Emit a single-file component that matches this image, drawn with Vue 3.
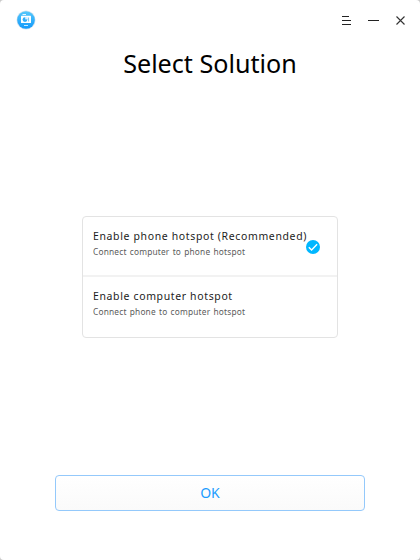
<script setup>
import { ref } from 'vue'

const selected = ref(0)
const options = [
  { title: 'Enable phone hotspot (Recommended)', detail: 'Connect computer to phone hotspot' },
  { title: 'Enable computer hotspot', detail: 'Connect phone to computer hotspot' },
]
</script>

<template>
  <div class="window">
    <header class="titlebar">
      <svg class="logo" width="20" height="20" viewBox="0 0 20 20">
        <defs>
          <linearGradient id="logo-fill" x1="0" y1="0" x2="0" y2="1">
            <stop offset="0" stop-color="#55c8fb" />
            <stop offset="1" stop-color="#1199fb" />
          </linearGradient>
        </defs>
        <circle cx="10" cy="10" r="9.5" fill="#d3e3ef" />
        <circle cx="10" cy="10" r="8.8" fill="url(#logo-fill)" />
        <path d="M6.5 4.5h3.5" stroke="#e6f6ff" stroke-width="1" />
        <rect x="5" y="5.8" width="10" height="7.2" rx=".5" fill="#fff" />
        <circle cx="9" cy="9.6" r="2.4" fill="#32aef8" />
        <path d="M9.2 9.4V7h2.4v2.4z" fill="#d6efff" />
        <path d="M12.6 7.5v4" stroke="#6cc5fa" stroke-width="1" />
        <path d="M8 15.5h4" stroke="#c9ebff" stroke-width="1" />
      </svg>
      <div class="controls">
        <button class="control menu" aria-label="Menu">
          <svg width="10" height="10" viewBox="0 0 10 10"><path d="M0 1.5h7M0 5.5h9M0 9.5h9" stroke="#222" /></svg>
        </button>
        <button class="control" aria-label="Minimize">
          <svg width="11" height="10" viewBox="0 0 11 10"><path d="M0 5.5h11" stroke="#222" /></svg>
        </button>
        <button class="control" aria-label="Close">
          <svg width="10" height="10" viewBox="0 0 10 10"><path d="M.5 1.5l8 8M8.5 1.5l-8 8" stroke="#333" stroke-width="1.1" /></svg>
        </button>
      </div>
    </header>
    <h1>Select Solution</h1>
    <main class="content">
      <div class="options">
        <div v-for="(option, i) in options" :key="option.title" class="option" @click="selected = i">
          <div class="name">{{ option.title }}</div>
          <div class="detail">{{ option.detail }}</div>
          <svg v-if="selected === i" class="check" width="14" height="14" viewBox="0 0 14 14">
            <circle cx="7" cy="7" r="7" fill="#00b7ff" />
            <path d="M2.8 7.2l2.8 2.7 5.5-5.6" fill="none" stroke="#fff" stroke-width="1.4" />
          </svg>
        </div>
      </div>
    </main>
    <button class="ok">OK</button>
  </div>
</template>

<style>
body {
  background: #c9c9c9;
}
</style>

<style scoped>
.window {
  box-sizing: border-box;
  display: flex;
  flex-direction: column;
  width: 420px;
  height: 560px;
  background: #fff;
  border-radius: 4px;
  font-family: "Noto Sans", sans-serif;
}
.titlebar {
  display: flex;
  justify-content: space-between;
  align-items: center;
  height: 40px;
  padding: 0 14px 0 16px;
}
.controls {
  display: flex;
  gap: 17px;
}
.control {
  display: flex;
  padding: 0;
  border: 0;
  background: none;
}
.menu {
  margin-right: -1px;
}
h1 {
  margin: 5px 0 0;
  height: 37px;
  line-height: 36px;
  font-size: 26px;
  font-weight: 400;
  text-align: center;
  color: #000;
  transform: scaleX(0.967);
}
.content {
  flex: 1;
  padding: 134px 82px 0;
}
.options {
  box-sizing: border-box;
  height: 122px;
  border: 1px solid #e3e3e3;
  border-radius: 4px;
}
.option {
  box-sizing: border-box;
  position: relative;
  height: 60px;
  padding: 11px 10px 0;
  white-space: nowrap;
}
.option + .option {
  border-top: 2px solid #f2f2f2;
  margin-top: -2px;
  height: 62px;
}
.name,
.detail {
  line-height: 16px;
  transform-origin: 0 50%;
}
.name {
  font-size: 11.4px;
  letter-spacing: 0.7px;
  color: #1c1c1c;
  transform: scaleX(0.92);
}
.detail {
  font-size: 9px;
  letter-spacing: 0.2px;
  word-spacing: 0.9px;
  color: #5c5c5c;
  transform: scaleX(0.925);
}
.check {
  position: absolute;
  top: 23px;
  right: 17px;
}
.ok {
  box-sizing: border-box;
  height: 36px;
  margin: 0 55px 49px;
  padding: 0;
  border: 1px solid #94c9fb;
  border-radius: 4px;
  background: linear-gradient(#fff, #fafafa);
  font-family: inherit;
  font-size: 14px;
  line-height: 34px;
  color: #1c9cff;
}
</style>
